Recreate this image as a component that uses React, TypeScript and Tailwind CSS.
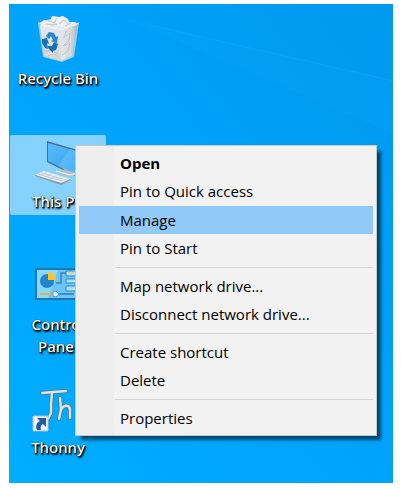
import type { ReactNode } from "react";

function RecycleBinIcon() {
  return (
    <svg viewBox="0 0 48 48" className="size-12" aria-hidden="true">
      <defs>
        <linearGradient id="bin-front" x1="0" y1="0" x2="0" y2="1">
          <stop offset="0" stopColor="#e6e9ec" />
          <stop offset="1" stopColor="#d3d6d8" />
        </linearGradient>
        <linearGradient id="bin-side" x1="0" x2="1">
          <stop offset="0" stopColor="#e4e6e8" />
          <stop offset=".6" stopColor="#d6dadd" />
          <stop offset="1" stopColor="#a9b8c4" />
        </linearGradient>
      </defs>
      <path d="M4 8 16 4 45 8 40 42 28 47 9 42Z" fill="#b9cfde" fillOpacity=".85" />
      <path d="M6 10 10 41 27 46V13Z" fill="url(#bin-front)" />
      <path d="M27 13 43 10 38 41 27 46Z" fill="url(#bin-side)" />
      <path d="m6 8 4-3 6 1 2-5 7 1 4-1 5 3 1 3 6 0 2 3-7 2-8 3-10-2-10-2Z" fill="#f1f2f3" />
      <path d="m15 6 5 2 3-5M25 9l5-4 4 4M12 9l7 1 4-1M31 11l6-3" fill="none" stroke="#c6ccd1" strokeWidth="1.3" />
      <path d="m33 15-4 8 7-5-1 7-6 6 7-3-2 8-6 4" fill="none" stroke="#c0c7cc" strokeWidth="1" />
      <path d="m11 37 6-2 7 4M14 41l6-2 6 4" fill="none" stroke="#bfc5c9" strokeWidth="1" />
      <path d="M4 8 27 13 45 8" fill="none" stroke="#e1e9ee" strokeWidth="1" />
      <path d="m12 21 3-4 5 1 2 4 2-1-1 7-6-2 2-1-2-4-2 3Z" fill="#2486d1" />
      <path d="m8 24 5-1 2 6-2-1 1 6-3-1-3-5Z" fill="#1674bf" />
      <path d="m14 31 4 0 2-4 4 2-2 6-3 1 0 2-5-5Z" fill="#176fb8" />
    </svg>
  );
}

function ComputerIcon() {
  return (
    <svg viewBox="0 0 48 48" className="size-12" aria-hidden="true">
      <defs>
        <linearGradient id="screen" x1="0" x2="1" y2="1">
          <stop offset="0" stopColor="#59bdfb" />
          <stop offset=".5" stopColor="#45acf4" />
          <stop offset="1" stopColor="#249cf0" />
        </linearGradient>
      </defs>
      <path d="M13 3 47 13V41L13 24Z" fill="#4a6f88" />
      <path d="M14 5 46 14V39L14 23Z" fill="url(#screen)" />
      <path d="M36 11 46 14V39L24 28Z" fill="#78ccff" fillOpacity=".4" />
      <path d="m27 30 5 1-9 2-3 1 16 5 9-3-9-3Z" fill="#b4c0c9" />
      <path d="m22 33 14 4 7-2" fill="none" stroke="#f1f5f8" />
      <path d="M1 37 10 33 37 41 27 45Z" fill="#e9edf0" />
      <path d="m1 37 26 8 10-4v1l-10 5L1 38Z" fill="#8c9ca8" />
      <path d="m4 36 25 7M7 35l25 7M6 38l7-4M11 39l7-3M16 41l7-3M21 42l7-3" stroke="#bcc7cf" strokeWidth=".7" />
    </svg>
  );
}

function ControlPanelIcon() {
  return (
    <svg viewBox="0 0 48 48" className="size-12" aria-hidden="true">
      <path d="M1 7H47V39H1Z" fill="#1f78ae" />
      <path d="M3 9H45V37H3Z" fill="#8dd6fc" />
      <path d="M24 9H45V37H14Z" fill="#6dc4f7" />
      <circle cx="13" cy="20" r="7" fill="#2385cc" />
      <path d="M14 19V11A8 8 0 0 1 22 19Z" fill="#ffc32c" />
      <path d="M22 22h5V12h5M32 12h12M32 19h12M32 26h12" fill="none" stroke="#2c86c1" strokeWidth="1.5" />
      <path d="M32 10h12v5H32ZM32 18h12v4H32ZM32 25h12v5H32Z" fill="#a9e2ff" stroke="#3189c3" />
      <path d="M34 12h6" stroke="#ffcb42" />
      <path d="M6 33h15" stroke="#d7b64f" strokeWidth="2" />
      <path d="M24 33h16" stroke="#3b92c9" strokeWidth="2" />
      <path d="m19 31 3-1 3 3-3 3-3-1Z" fill="#eefaff" stroke="#3594d0" strokeWidth=".8" />
    </svg>
  );
}

function ThonnyIcon() {
  return (
    <svg viewBox="0 0 48 48" className="size-12 overflow-visible" aria-hidden="true">
      <g fill="none" strokeLinecap="round" strokeLinejoin="round">
        <g stroke="#50758c" strokeWidth="4">
          <path d="M8 9 19 8 32 7M18 9 17 20 17 29 14 35" />
          <path d="M26 14 27 25 25 35M27 26C29 21 35 20 36 25L36 34" />
        </g>
        <g stroke="#dce4e8" strokeWidth="2.4">
          <path d="M8 9 19 8 32 7M18 9 17 20 17 29 14 35" />
          <path d="M26 14 27 25 25 35M27 26C29 21 35 20 36 25L36 34" />
        </g>
      </g>
      <path d="M-1 32H14V47H-1Z" fill="#f8fafc" stroke="#a7bacb" />
      <path d="M3 34H12V43L9 40C7 41 6 43 7 46H3C1 42 3 38 6 37Z" fill="#245aa5" />
    </svg>
  );
}

function DesktopItem({ label, icon, selected = false }: { label: string; icon: ReactNode; selected?: boolean }) {
  return (
    <li className="not-last:h-[123px]">
      <button
        type="button"
        className={`flex min-h-20 w-24 flex-col items-center rounded-xs px-1 pt-[3px] ${selected ? "bg-[#85d2ff]" : ""}`}
      >
        {icon}
        <span className="mt-1 font-['Noto_Sans',sans-serif] text-[15px] leading-[22px] font-medium text-white [text-shadow:0_0_1px_#000,1px_1px_1px_#000,1px_2px_2px_#000]">
          {label}
        </span>
      </button>
    </li>
  );
}

const menuGroups = [
  ["Open", "Pin to Quick access", "Manage", "Pin to Start"],
  ["Map network drive...", "Disconnect network drive..."],
  ["Create shortcut", "Delete"],
  ["Properties"],
];

function ContextMenu() {
  return (
    <div
      role="menu"
      aria-label="This PC"
      className="absolute top-[141px] left-[66px] w-[302px] border border-[#c8c8c8] bg-[#f2f2f2] bg-linear-to-r from-[#eeeeee] from-[38px] to-[#f2f2f2] to-[38px] p-[3px] shadow-[5px_5px_3px_-1px_rgba(0,0,0,0.55)]"
    >
      {menuGroups.map((group, index) => (
        <div key={group[0]}>
          {index > 0 && <hr className="my-1 ml-9 border-[#d5d5d5]" />}
          <div role="group">
            {group.map((label) => (
              <button
                key={label}
                type="button"
                role="menuitem"
                className={`flex h-7 w-full items-center pl-[41px] text-left text-[15px] text-black even:h-[29px] ${
                  label === "Open" ? "font-bold" : ""
                } ${label === "Manage" ? "bg-[#91c9f7]" : ""}`}
              >
                {label}
              </button>
            ))}
          </div>
        </div>
      ))}
    </div>
  );
}

export default function App() {
  return (
    <div className="flex min-h-screen bg-white pt-1 pr-2 pb-[7px] pl-[9px] font-['Open_Sans','Noto_Sans',sans-serif]">
      <main className="relative flex-1 bg-linear-to-bl from-[#0099ee] via-[#00a2fa] via-45% to-[#00adff]">
        <svg
          viewBox="0 0 384 480"
          preserveAspectRatio="none"
          className="pointer-events-none absolute inset-0 size-full"
          aria-hidden="true"
        >
          <path d="M100 10 384 76V130L80 0Z" fill="#12a7ff" fillOpacity=".15" />
          <path d="M140 21 384 77" stroke="#39b5ff" strokeOpacity=".2" />
        </svg>
        <ul className="relative pt-2 pl-px">
          <DesktopItem label="Recycle Bin" icon={<RecycleBinIcon />} />
          <DesktopItem label="This PC" icon={<ComputerIcon />} selected />
          <DesktopItem label="Control Panel" icon={<ControlPanelIcon />} />
          <DesktopItem label="Thonny" icon={<ThonnyIcon />} />
        </ul>
        <ContextMenu />
      </main>
    </div>
  );
}
